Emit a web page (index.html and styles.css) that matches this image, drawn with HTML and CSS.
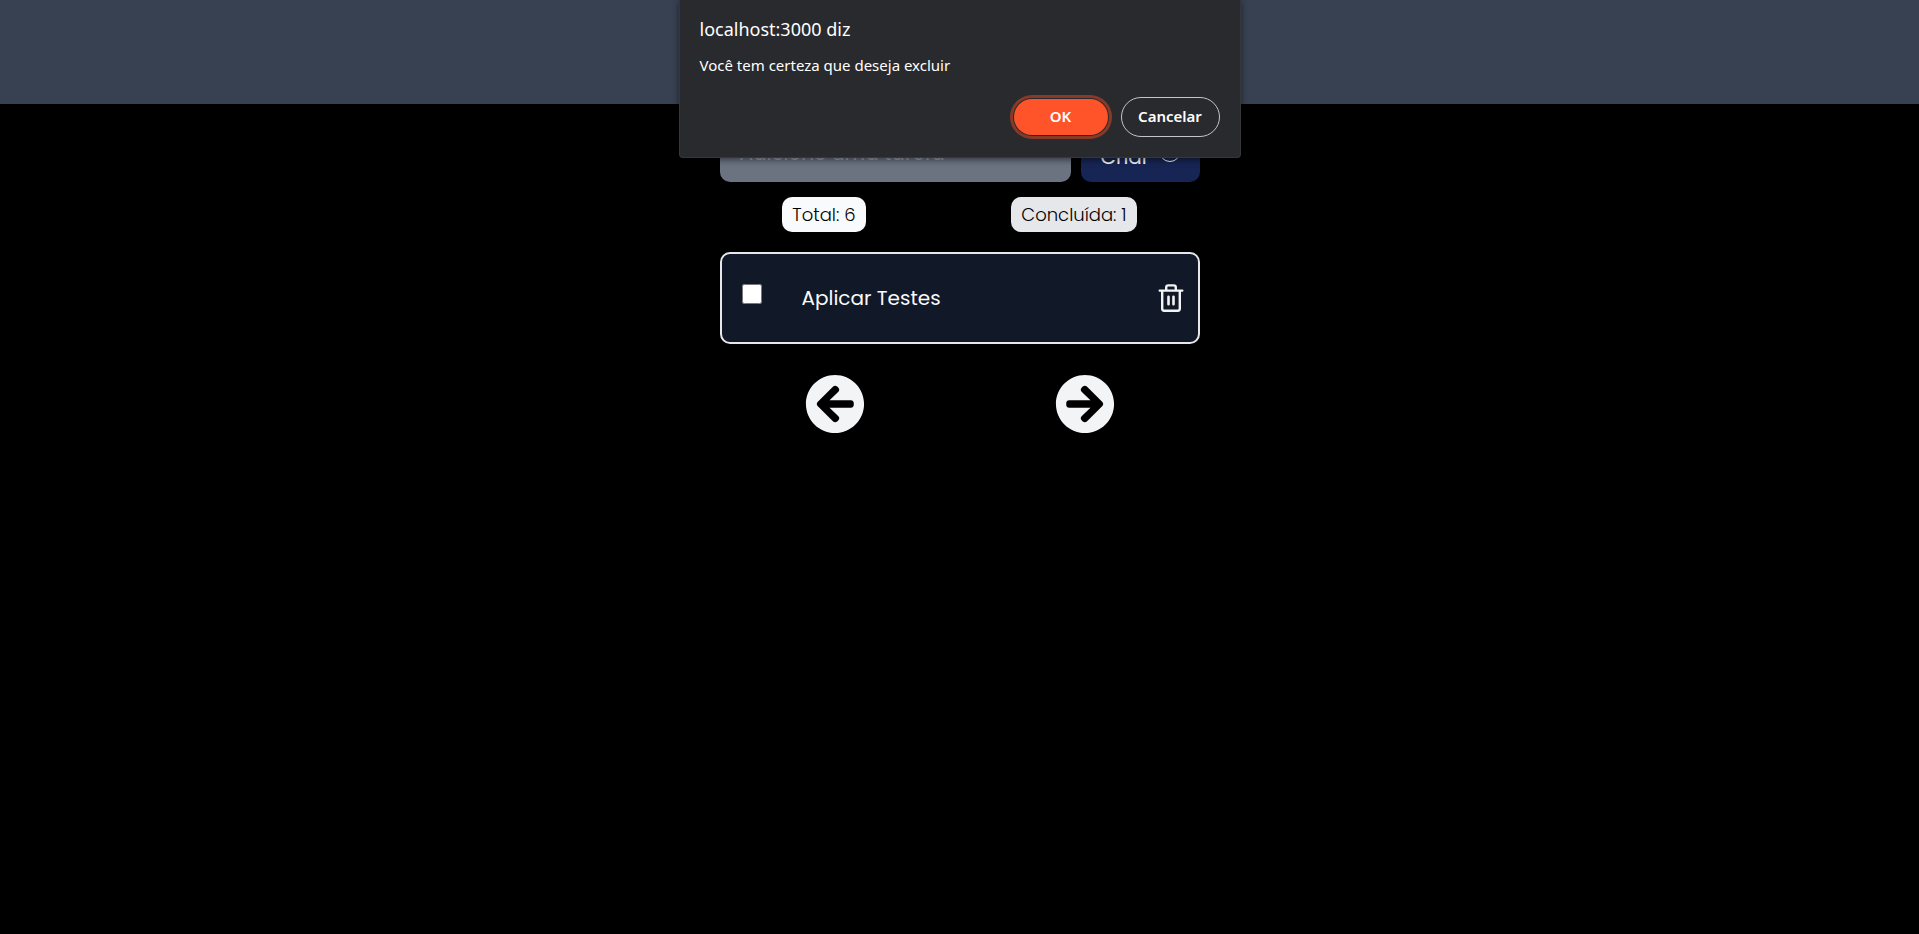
FILE: index.html
```html
<!DOCTYPE html>
<html lang="pt-BR">
<head>
<meta charset="utf-8">
<title>Tarefas</title>
<link rel="stylesheet" href="styles.css">
</head>
<body>
<header class="topbar"></header>
<main class="tasks">
  <form class="new-task">
    <input class="new-task-input" type="text" aria-label="Nova tarefa" placeholder="Adicione uma tarefa">
    <button class="create" type="button">Criar
      <svg class="create-icon" viewBox="0 0 24 24" fill="none" stroke="currentColor" stroke-linecap="round"><circle cx="12" cy="12" r="10.5"/><path d="M12 6.5v11M6.5 12h11"/></svg>
    </button>
  </form>
  <div class="counters">
    <span class="counter counter-total">Total: 6</span>
    <span class="counter counter-done">Concluída: 1</span>
  </div>
  <ul class="list">
    <li class="task">
      <input class="task-check" id="task-1" type="checkbox">
      <label class="task-name" for="task-1">Aplicar Testes</label>
      <button class="remove" type="button" aria-label="Excluir">
        <svg class="remove-icon" viewBox="0 0 26 28" fill="none" stroke="currentColor" stroke-linecap="round" stroke-linejoin="round"><path stroke-width="2.4" d="M1.7 6.6H24.3M4.2 6.6V24.8Q4.2 26.7 6.1 26.7H19.9Q21.8 26.7 21.8 24.8V6.6M8.2 6.3V3.5Q8.2 1.4 10.3 1.4H15.7Q17.8 1.4 17.8 3.5V6.3"/><path stroke-width="2.6" d="M10.5 12.7V20.3M15.5 12.7V20.3"/></svg>
      </button>
    </li>
  </ul>
  <nav class="pager" aria-label="Páginas">
    <button class="page-button" type="button" aria-label="Anterior">
      <svg class="page-icon" viewBox="0 0 512 512" fill="currentColor"><path d="M256 504C119 504 8 393 8 256S119 8 256 8s248 111 248 248-111 248-248 248zm28.900-143.600L209.400 288H392c13.300 0 24-10.700 24-24v-16c0-13.300-10.700-24-24-24H209.400l75.500-72.400c9.700-9.300 9.900-24.800.4-34.300l-11-10.900c-9.400-9.400-24.600-9.400-33.900 0L107.700 239c-9.400 9.400-9.400 24.600 0 33.900l132.700 132.700c9.400 9.400 24.600 9.400 33.900 0l11-10.900c9.500-9.500 9.300-25-.4-34.300z"/></svg>
    </button>
    <button class="page-button" type="button" aria-label="Próxima">
      <svg class="page-icon" viewBox="0 0 512 512" fill="currentColor"><path d="M256 8c137 0 248 111 248 248S393 504 256 504 8 393 8 256 119 8 256 8zm-28.900 143.600l75.500 72.400H120c-13.300 0-24 10.700-24 24v16c0 13.300 10.700 24 24 24h182.600l-75.500 72.400c-9.700 9.300-9.900 24.800-.4 34.300l11 10.900c9.400 9.400 24.600 9.400 33.900 0L404.300 273c9.400-9.400 9.400-24.600 0-33.900L271.600 106.300c-9.400-9.400-24.600-9.400-33.900 0l-11 10.900c-9.500 9.600-9.300 25.100.4 34.400z"/></svg>
    </button>
  </nav>
</main>
<dialog class="alert" open aria-labelledby="alert-title">
  <h1 class="alert-title" id="alert-title">localhost:3000 diz</h1>
  <p class="alert-message">Você tem certeza que deseja excluir</p>
  <div class="alert-actions">
    <button class="alert-button alert-ok" type="button">OK</button>
    <button class="alert-button alert-cancel" type="button">Cancelar</button>
  </div>
</dialog>
</body>
</html>
```
FILE: styles.css
```css
* {
  box-sizing: border-box;
}

body {
  margin: 0;
  min-height: 100vh;
  background: #000;
  color: #f9fafb;
  font-family: Poppins, Inter, sans-serif;
}

button,
input {
  font-family: inherit;
}

button {
  cursor: pointer;
}

.topbar {
  height: 104px;
  background: #374151;
}

.tasks {
  width: 100%;
  max-width: 480px;
  margin: 24px auto 0;
}

.new-task {
  display: flex;
  gap: 10px;
}

.new-task-input {
  flex: 1;
  min-width: 0;
  height: 54px;
  padding: 0 20px 4px;
  border: 0;
  border-radius: 10px;
  background: #6b7280;
  color: #f9fafb;
  font-size: 20px;
}

.new-task-input::placeholder {
  color: #9ca3af;
}

.create {
  display: flex;
  align-items: center;
  justify-content: space-between;
  width: 119px;
  padding: 4px 18px 0 20px;
  border: 0;
  border-radius: 10px;
  background: #172554;
  color: #f9fafb;
  font-size: 20px;
}

.create-icon {
  width: 24px;
  height: 24px;
  margin-bottom: 12px;
}

.counters,
.pager {
  display: flex;
  justify-content: space-around;
  gap: 20px;
}

.counters {
  margin-top: 15px;
}

.counter {
  padding: 0 10px;
  border-radius: 10px;
  color: #000;
  font-size: 18px;
  font-weight: 300;
  line-height: 35px;
}

.counter-total {
  background: #f9fafb;
}

.counter-done {
  background: #e5e7eb;
}

.list {
  margin: 20px 0 0;
  padding: 0;
  list-style: none;
}

.task {
  display: flex;
  align-items: center;
  height: 92px;
  padding: 0 14px 0 20px;
  border: 2px solid #e5e7eb;
  border-radius: 10px;
  background: #111827;
}

.task-check {
  width: 20px;
  height: 20px;
  margin: 0 0 8px;
}

.task-name {
  flex: 1;
  margin-left: 40px;
  font-size: 20px;
}

.remove,
.page-button {
  padding: 0;
  border: 0;
  background: none;
  color: #f3f4f6;
}

.remove-icon {
  display: block;
  width: 26px;
  height: 28px;
}

.pager {
  margin-top: 30px;
}

.page-icon {
  display: block;
  width: 60px;
  height: 60px;
}

.alert {
  position: absolute;
  top: 0;
  width: 562px;
  margin: 0 auto;
  padding: 16px 20px 20px;
  border: 1px solid #36373a;
  border-top: 0;
  border-radius: 0 0 4px 4px;
  background: #292a2d;
  box-shadow: 0 2px 6px rgba(0, 0, 0, 0.5);
  color: #fff;
  font-family: "Segoe UI", "Noto Sans", sans-serif;
}

.alert-title {
  margin: 0;
  font-size: 18px;
  font-weight: 400;
  line-height: 26px;
}

.alert-message {
  margin: 11px 0 0;
  font-size: 15px;
  line-height: 24px;
}

.alert-actions {
  display: flex;
  align-items: center;
  justify-content: flex-end;
  gap: 13px;
  margin-top: 20px;
}

.alert-button {
  padding: 0 0 2px;
  border-radius: 20px;
  color: #fff;
  font-size: 15px;
  font-weight: 600;
}

.alert-ok {
  width: 94px;
  height: 36px;
  border: 0;
  background: #ff5429;
  box-shadow: 0 0 0 1px #292a2d, 0 0 0 4px #873a28;
}

.alert-cancel {
  width: 99px;
  height: 40px;
  border: 1px solid #c4c5cc;
  background: transparent;
}
```
